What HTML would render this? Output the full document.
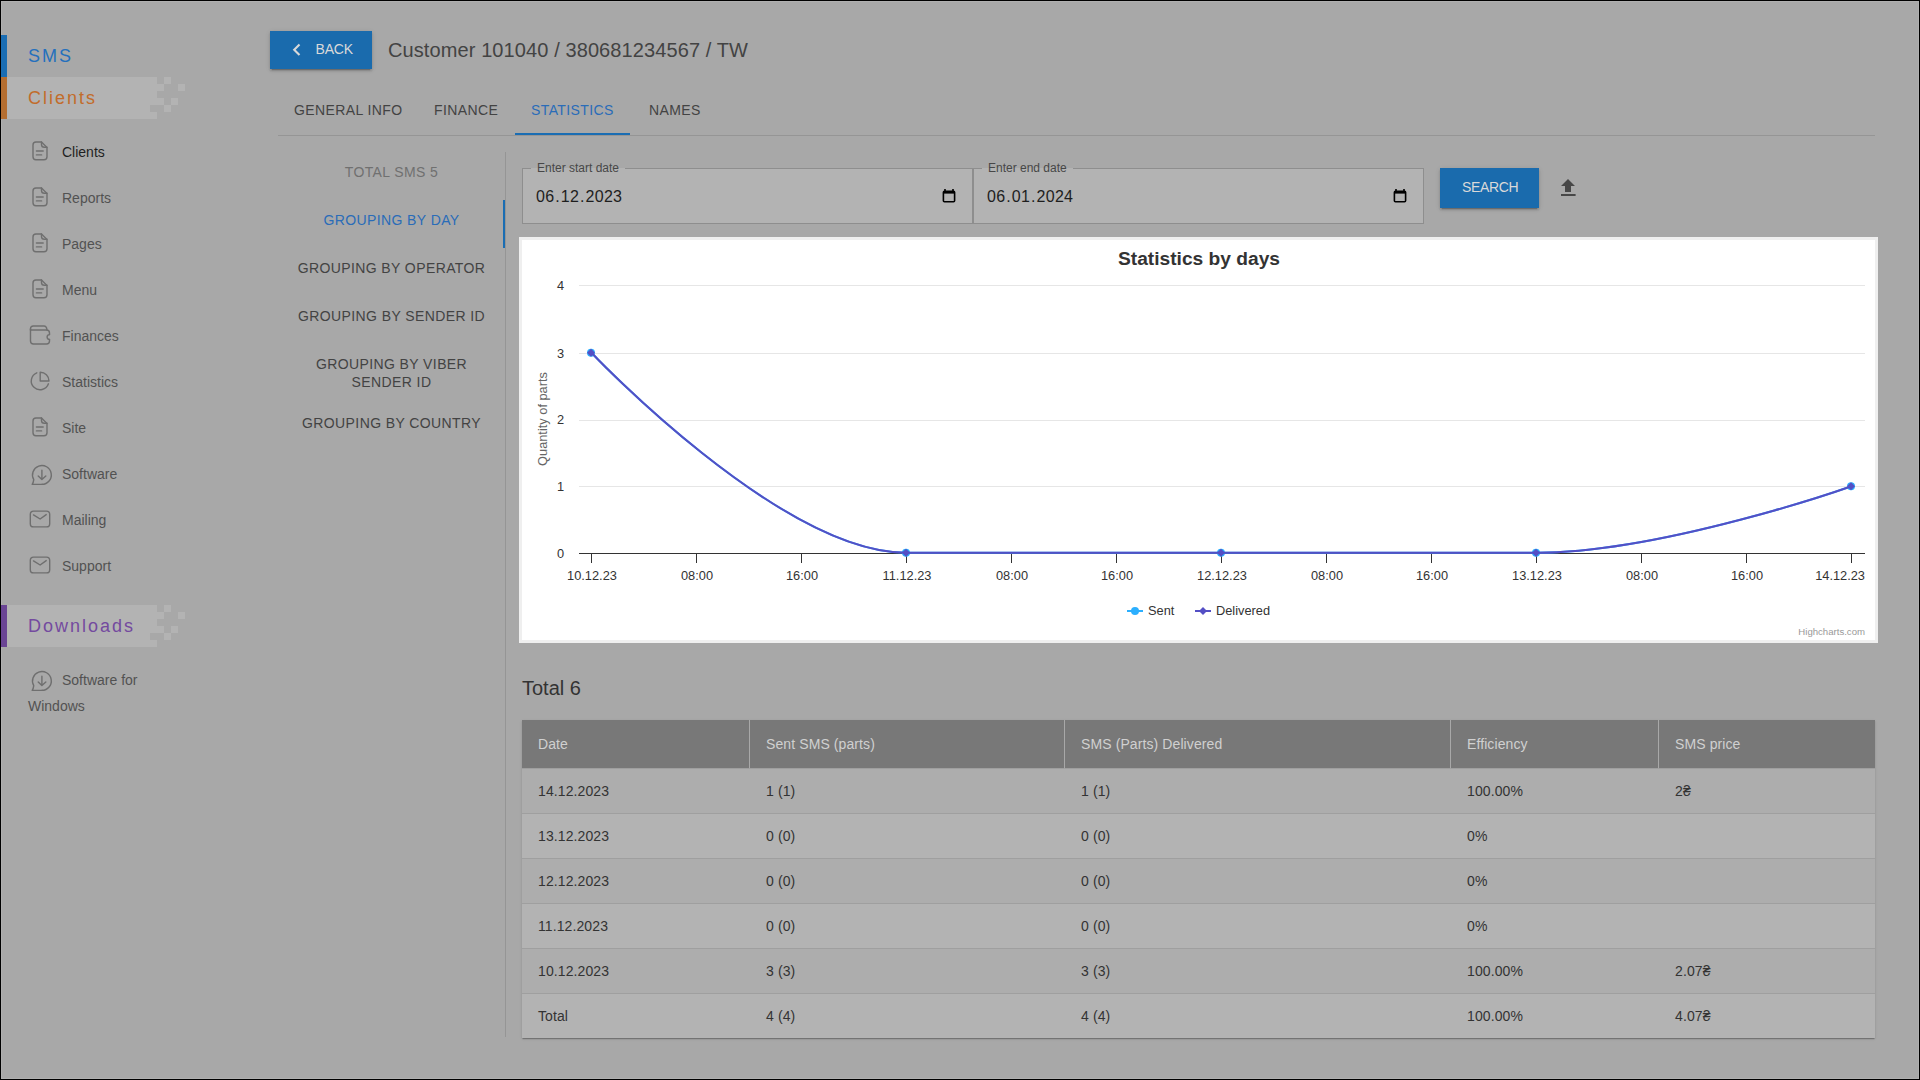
<!DOCTYPE html>
<html><head><meta charset="utf-8">
<style>
*{box-sizing:border-box;margin:0;padding:0}
html,body{width:1920px;height:1080px;overflow:hidden}
body{position:relative;background:#a8a8a8;font-family:"Liberation Sans",sans-serif;color:#333}
.frame{position:absolute;left:0;top:0;width:1920px;height:1080px;border:1px solid #000;z-index:50;pointer-events:none}
.frame2{position:absolute;left:1px;top:1px;width:1918px;height:1078px;border:1px solid #b0b0b0;z-index:49}
.abs{position:absolute;white-space:nowrap}
.sec{position:absolute;left:1px;height:42px;z-index:55}
.sec .bar{position:absolute;left:0;top:0;width:6px;height:42px}
.sec .txt{position:absolute;left:27px;top:0;line-height:42px;font-size:18px;letter-spacing:2px}
.hl{position:absolute;left:6px;top:0;width:150px;height:42px;background:#b3b3b3}
.px{position:absolute;width:7px;height:7px;background:#b3b3b3}
.nav{position:absolute;left:62px;font-size:14px;color:#525252;line-height:16px}
.ico{position:absolute;left:26px;width:30px;height:28px}
.ico svg{width:30px;height:28px;display:block}
.ico path,.ico rect{fill:none;stroke:#6f6f6f;stroke-width:1.4;stroke-linecap:round;stroke-linejoin:round}
.tab{position:absolute;top:102px;font-size:14px;letter-spacing:0.4px;color:#434343;line-height:16px}
.vt{position:absolute;left:278px;width:227px;text-align:center;font-size:14px;letter-spacing:0.4px;color:#434343;line-height:18px}
.inp{position:absolute;top:168px;height:56px;background:#b3b3b3;border:1px solid #8e8e8e}
.inp .lbl{position:absolute;left:8px;top:-8px;padding:0 6px;font-size:12px;line-height:14px;color:#474747;background:linear-gradient(#a8a8a8 0,#a8a8a8 7px,#b3b3b3 7px)}
.inp .val{position:absolute;left:13px;top:19px;font-size:16px;line-height:18px;color:#1e1e1e;letter-spacing:0.3px}
.btn{position:absolute;background:#1a6bad;color:#d9d9d9;font-size:14px;box-shadow:0px 3px 1px -2px rgba(0,0,0,0.2),0px 2px 2px 0px rgba(0,0,0,0.14),0px 1px 5px 0px rgba(0,0,0,0.12)}
table{position:absolute;left:522px;top:720px;width:1353px;border-collapse:separate;border-spacing:0;table-layout:fixed;font-size:14px;box-shadow:0px 2px 1px -1px rgba(0,0,0,0.17),0px 1px 1px 0px rgba(0,0,0,0.11),0px 1px 3px 0px rgba(0,0,0,0.1)}
th{background:#787878;color:#d0d0d0;letter-spacing:0.1px;font-weight:normal;text-align:left;height:49px;padding:0 0 0 16px;border-left:1px solid #a8a8a8;border-bottom:1px solid #9f9f9f}
th:first-child{border-left:none}
td{background:#b3b3b3;color:#333;letter-spacing:0.1px;height:45px;padding:14px 0 0 16px;vertical-align:top;line-height:16px;border-bottom:1px solid #9f9f9f}
tr:last-child td{border-bottom:none;height:44px}
td+td{padding-left:17px}
tr:nth-child(even) td{background:#adadad}
.lab{font-size:12.8px;fill:#333}
.leg{font-size:12.8px;fill:#333}
.val i{font-style:normal;margin:0 0.8px}
</style></head><body>
<div class="frame"></div><div class="frame2"></div>

<!-- SIDEBAR -->
<div class="sec" style="top:35px"><div class="bar" style="background:#1a6db3"></div><div class="txt" style="color:#2470bd">SMS</div></div>

<div class="abs" style="left:7px;top:77px;width:150px;height:7px;background:#b3b3b3;z-index:54"></div>
<div class="abs" style="left:164px;top:77px;width:7px;height:7px;background:#b3b3b3;z-index:54"></div>
<div class="abs" style="left:7px;top:84px;width:157px;height:7px;background:#b3b3b3;z-index:54"></div>
<div class="abs" style="left:178px;top:84px;width:7px;height:7px;background:#b3b3b3;z-index:54"></div>
<div class="abs" style="left:7px;top:91px;width:150px;height:7px;background:#b3b3b3;z-index:54"></div>
<div class="abs" style="left:7px;top:98px;width:157px;height:7px;background:#b3b3b3;z-index:54"></div>
<div class="abs" style="left:171px;top:98px;width:7px;height:7px;background:#b3b3b3;z-index:54"></div>
<div class="abs" style="left:7px;top:105px;width:143px;height:7px;background:#b3b3b3;z-index:54"></div>
<div class="abs" style="left:164px;top:105px;width:7px;height:7px;background:#b3b3b3;z-index:54"></div>
<div class="abs" style="left:7px;top:112px;width:150px;height:7px;background:#b3b3b3;z-index:54"></div>
<div class="sec" style="top:77px;width:200px">
  <div class="bar" style="background:#b46e31"></div>
  <div class="txt" style="color:#c26c2b">Clients</div>
</div>

<div class="ico" style="top:136px"><svg viewBox="0 0 30 28"><path d="M15.5 6 H10 Q7 6 7 9 V20.8 Q7 23.8 10 23.8 H18 Q21 23.8 21 20.8 V11.5 Z"/><path d="M15.5 6 V8.5 Q15.5 11.3 18.3 11.3 H21"/><path d="M10.4 15 H17.2 M10.4 18.9 H15.6"/></svg></div>
<div class="ico" style="top:182px"><svg viewBox="0 0 30 28"><path d="M15.5 6 H10 Q7 6 7 9 V20.8 Q7 23.8 10 23.8 H18 Q21 23.8 21 20.8 V11.5 Z"/><path d="M15.5 6 V8.5 Q15.5 11.3 18.3 11.3 H21"/><path d="M10.4 15 H17.2 M10.4 18.9 H15.6"/></svg></div>
<div class="ico" style="top:228px"><svg viewBox="0 0 30 28"><path d="M15.5 6 H10 Q7 6 7 9 V20.8 Q7 23.8 10 23.8 H18 Q21 23.8 21 20.8 V11.5 Z"/><path d="M15.5 6 V8.5 Q15.5 11.3 18.3 11.3 H21"/><path d="M10.4 15 H17.2 M10.4 18.9 H15.6"/></svg></div>
<div class="ico" style="top:274px"><svg viewBox="0 0 30 28"><path d="M15.5 6 H10 Q7 6 7 9 V20.8 Q7 23.8 10 23.8 H18 Q21 23.8 21 20.8 V11.5 Z"/><path d="M15.5 6 V8.5 Q15.5 11.3 18.3 11.3 H21"/><path d="M10.4 15 H17.2 M10.4 18.9 H15.6"/></svg></div>
<div class="ico" style="top:322px"><svg viewBox="0 0 30 28"><path d="M4.5 8 H20.5 Q23.5 8 23.5 11 V12.6 M23.5 17.4 V19 Q23.5 22 20.5 22 H7.5 Q4.5 22 4.5 19 V7"/><path d="M4.5 8 V6.8 Q4.5 4 7.3 4 H18 Q20.6 4 21 8"/><path d="M23.5 12.6 A2.4 2.4 0 0 0 23.5 17.4"/></svg></div>
<div class="ico" style="top:368px"><svg viewBox="0 0 30 28"><path d="M10.8 4.8 A8.8 8.8 0 1 0 22.4 15.8"/><path d="M14.2 4.2 V13 H23 A8.8 8.8 0 0 0 14.2 4.2 Z"/></svg></div>
<div class="ico" style="top:412px"><svg viewBox="0 0 30 28"><path d="M15.5 6 H10 Q7 6 7 9 V20.8 Q7 23.8 10 23.8 H18 Q21 23.8 21 20.8 V11.5 Z"/><path d="M15.5 6 V8.5 Q15.5 11.3 18.3 11.3 H21"/><path d="M10.4 15 H17.2 M10.4 18.9 H15.6"/></svg></div>
<div class="ico" style="top:460px"><svg viewBox="0 0 30 28"><path d="M15.9 24.3 A9.4 9.4 0 1 0 7.76 19.6 Q7.4 22.5 6.2 24.4 H15.9"/><path d="M15.9 10.2 V19.4 M12.2 15.9 L15.9 19.6 L19.8 15.9"/></svg></div>
<div class="ico" style="top:506px"><svg viewBox="0 0 30 28"><rect x="4.3" y="5.1" width="19.4" height="15.8" rx="3.2"/><path d="M7.5 8.9 L14.1 13 L20.2 8.6"/></svg></div>
<div class="ico" style="top:552px"><svg viewBox="0 0 30 28"><rect x="4.3" y="5.1" width="19.4" height="15.8" rx="3.2"/><path d="M7.5 8.9 L14.1 13 L20.2 8.6"/></svg></div>
<div class="ico" style="top:666px"><svg viewBox="0 0 30 28"><path d="M15.9 24.3 A9.4 9.4 0 1 0 7.76 19.6 Q7.4 22.5 6.2 24.4 H15.9"/><path d="M15.9 10.2 V19.4 M12.2 15.9 L15.9 19.6 L19.8 15.9"/></svg></div>
<div class="nav" style="top:144px;color:#1f1f1f">Clients</div>
<div class="nav" style="top:190px">Reports</div>
<div class="nav" style="top:236px">Pages</div>
<div class="nav" style="top:282px">Menu</div>
<div class="nav" style="top:328px">Finances</div>
<div class="nav" style="top:374px">Statistics</div>
<div class="nav" style="top:420px">Site</div>
<div class="nav" style="top:466px">Software</div>
<div class="nav" style="top:512px">Mailing</div>
<div class="nav" style="top:558px">Support</div>

<div class="abs" style="left:7px;top:605px;width:150px;height:7px;background:#b3b3b3;z-index:54"></div>
<div class="abs" style="left:164px;top:605px;width:7px;height:7px;background:#b3b3b3;z-index:54"></div>
<div class="abs" style="left:7px;top:612px;width:157px;height:7px;background:#b3b3b3;z-index:54"></div>
<div class="abs" style="left:178px;top:612px;width:7px;height:7px;background:#b3b3b3;z-index:54"></div>
<div class="abs" style="left:7px;top:619px;width:150px;height:7px;background:#b3b3b3;z-index:54"></div>
<div class="abs" style="left:7px;top:626px;width:157px;height:7px;background:#b3b3b3;z-index:54"></div>
<div class="abs" style="left:171px;top:626px;width:7px;height:7px;background:#b3b3b3;z-index:54"></div>
<div class="abs" style="left:7px;top:633px;width:143px;height:7px;background:#b3b3b3;z-index:54"></div>
<div class="abs" style="left:164px;top:633px;width:7px;height:7px;background:#b3b3b3;z-index:54"></div>
<div class="abs" style="left:7px;top:640px;width:150px;height:7px;background:#b3b3b3;z-index:54"></div>
<div class="sec" style="top:605px;width:200px">
  <div class="bar" style="background:#6a4494"></div>
  <div class="txt" style="color:#744a9f">Downloads</div>
</div>

<div class="nav" style="top:672px">Software for</div>
<div class="nav" style="top:698px;left:28px">Windows</div>

<!-- HEADER -->
<div class="btn" style="left:270px;top:31px;width:102px;height:38px"><svg style="position:absolute;left:290px;left:20px;top:10px" width="16" height="18" viewBox="0 0 16 18"><path d="M9.5 3.5 L4.2 8.8 L9.5 14" fill="none" stroke="#d9d9d9" stroke-width="2.1" stroke-linecap="butt"/></svg><span style="position:absolute;left:45.5px;top:10px;line-height:17px;font-size:14px;letter-spacing:-0.2px">BACK</span></div>
<div class="abs" style="left:388px;top:38px;font-size:20px;line-height:24px;letter-spacing:0.1px;color:#434343">Customer 101040 / 380681234567 / TW</div>

<div class="tab" style="left:294px">GENERAL INFO</div>
<div class="tab" style="left:434px">FINANCE</div>
<div class="tab" style="left:531px;color:#2a6cb8">STATISTICS</div>
<div class="tab" style="left:649px">NAMES</div>
<div class="abs" style="left:278px;top:135px;width:1597px;height:1px;background:#959595"></div>
<div class="abs" style="left:515px;top:133px;width:115px;height:2px;background:#1a6db3"></div>

<!-- VERTICAL TABS -->
<div class="abs" style="left:505px;top:152px;width:1px;height:885px;background:#959595"></div>
<div class="abs" style="left:503px;top:200px;width:2px;height:48px;background:#1a6db3"></div>
<div class="vt" style="top:163px;color:#707070">TOTAL SMS 5</div>
<div class="vt" style="top:211px;color:#2a6cb8">GROUPING BY DAY</div>
<div class="vt" style="top:259px">GROUPING BY OPERATOR</div>
<div class="vt" style="top:307px">GROUPING BY SENDER ID</div>
<div class="vt" style="top:355px">GROUPING BY VIBER<br>SENDER ID</div>
<div class="vt" style="top:414px">GROUPING BY COUNTRY</div>

<!-- INPUTS -->
<div class="inp" style="left:522px;width:451px"><div class="lbl">Enter start date</div><div class="val">06<i>.</i>12<i>.</i>2023</div><svg style="position:absolute;right:16px;top:19px" width="14" height="16" viewBox="0 0 14 16"><path d="M3 1 V3 M11 1 V3" stroke="#000" stroke-width="1.6"/><rect x="1.4" y="3.2" width="11.2" height="10.6" rx="1" fill="none" stroke="#000" stroke-width="1.6"/><rect x="1.4" y="3" width="11.2" height="2.6" fill="#000"/></svg></div>
<div class="inp" style="left:973px;width:451px"><div class="lbl">Enter end date</div><div class="val">06<i>.</i>01<i>.</i>2024</div><svg style="position:absolute;right:16px;top:19px" width="14" height="16" viewBox="0 0 14 16"><path d="M3 1 V3 M11 1 V3" stroke="#000" stroke-width="1.6"/><rect x="1.4" y="3.2" width="11.2" height="10.6" rx="1" fill="none" stroke="#000" stroke-width="1.6"/><rect x="1.4" y="3" width="11.2" height="2.6" fill="#000"/></svg></div>
<div class="btn" style="left:1440px;top:168px;width:99px;height:40px"><span style="position:absolute;left:22px;top:11px;line-height:17px;font-size:14px;letter-spacing:-0.35px">SEARCH</span></div>
<svg class="abs" style="left:1555.5px;top:176px" width="24" height="24" viewBox="0 0 24 24"><path d="M5 20h14.6v-2H5v2zm0-10h4v6h6v-6h4l-7-7-7 7z" fill="#474747"/></svg>

<!-- CHART -->
<div class="abs" style="left:519px;top:237px;width:1359px;height:406px;background:#efefef"></div>
<div class="abs" style="left:522px;top:240px;width:1353px;height:400px;background:#fff"></div>
<svg class="abs" style="left:522px;top:240px" width="1353" height="400" viewBox="522 240 1353 400" font-family="Liberation Sans, sans-serif">
<text x="1199" y="265" text-anchor="middle" style="font-size:19.2px;font-weight:bold;fill:#333">Statistics by days</text>
<path d="M579 285.5 H1865" stroke="#e6e6e6" stroke-width="1"/>
<path d="M579 353.5 H1865" stroke="#e6e6e6" stroke-width="1"/>
<path d="M579 420.5 H1865" stroke="#e6e6e6" stroke-width="1"/>
<path d="M579 486.5 H1865" stroke="#e6e6e6" stroke-width="1"/>
<path d="M579 553.5 H1865" stroke="#333" stroke-width="1"/>
<path d="M591.5 553 V563 M696.5 553 V563 M801.5 553 V563 M906.5 553 V563 M1011.5 553 V563 M1116.5 553 V563 M1221.5 553 V563 M1326.5 553 V563 M1431.5 553 V563 M1536.5 553 V563 M1641.5 553 V563 M1746.5 553 V563 M1851.5 553 V563 " stroke="#333" stroke-width="1"/>
<text x="564" y="290.4" text-anchor="end" class="lab">4</text>
<text x="564" y="357.6" text-anchor="end" class="lab">3</text>
<text x="564" y="424.3" text-anchor="end" class="lab">2</text>
<text x="564" y="491.1" text-anchor="end" class="lab">1</text>
<text x="564" y="557.8" text-anchor="end" class="lab">0</text>
<text x="592.0" y="580" text-anchor="middle" class="lab">10.12.23</text>
<text x="697.0" y="580" text-anchor="middle" class="lab">08:00</text>
<text x="802.0" y="580" text-anchor="middle" class="lab">16:00</text>
<text x="907.0" y="580" text-anchor="middle" class="lab">11.12.23</text>
<text x="1012.0" y="580" text-anchor="middle" class="lab">08:00</text>
<text x="1117.0" y="580" text-anchor="middle" class="lab">16:00</text>
<text x="1222.0" y="580" text-anchor="middle" class="lab">12.12.23</text>
<text x="1327.0" y="580" text-anchor="middle" class="lab">08:00</text>
<text x="1432.0" y="580" text-anchor="middle" class="lab">16:00</text>
<text x="1537.0" y="580" text-anchor="middle" class="lab">13.12.23</text>
<text x="1642.0" y="580" text-anchor="middle" class="lab">08:00</text>
<text x="1747.0" y="580" text-anchor="middle" class="lab">16:00</text>
<text x="1865" y="580" text-anchor="end" class="lab">14.12.23</text>
<text transform="translate(547 419) rotate(-90)" text-anchor="middle" style="font-size:12.8px;fill:#666">Quantity of parts</text>
<path d="M 591.50 352.75 C 591.50 352.75 780.50 552.75 906.50 552.75 C 1032.50 552.75 1095.50 552.75 1221.50 552.75 C 1347.50 552.75 1410.50 552.75 1536.50 552.75 C 1662.50 552.75 1851.50 486.25 1851.50 486.25" fill="none" stroke="#2caffe" stroke-width="2" stroke-linejoin="round" stroke-linecap="round"/>
<circle cx="591" cy="352.75" r="4" fill="#2caffe"/>
<circle cx="906" cy="552.75" r="4" fill="#2caffe"/>
<circle cx="1221" cy="552.75" r="4" fill="#2caffe"/>
<circle cx="1536" cy="552.75" r="4" fill="#2caffe"/>
<circle cx="1851" cy="486.25" r="4" fill="#2caffe"/>
<path d="M 591.50 352.75 C 591.50 352.75 780.50 552.75 906.50 552.75 C 1032.50 552.75 1095.50 552.75 1221.50 552.75 C 1347.50 552.75 1410.50 552.75 1536.50 552.75 C 1662.50 552.75 1851.50 486.25 1851.50 486.25" fill="none" stroke="#544fc5" stroke-width="2" stroke-linejoin="round" stroke-linecap="round"/>
<path d="M591 348.75 L595 352.75 L591 356.75 L587 352.75 Z" fill="#544fc5"/>
<path d="M906 548.75 L910 552.75 L906 556.75 L902 552.75 Z" fill="#544fc5"/>
<path d="M1221 548.75 L1225 552.75 L1221 556.75 L1217 552.75 Z" fill="#544fc5"/>
<path d="M1536 548.75 L1540 552.75 L1536 556.75 L1532 552.75 Z" fill="#544fc5"/>
<path d="M1851 482.25 L1855 486.25 L1851 490.25 L1847 486.25 Z" fill="#544fc5"/>
<path d="M1127 611 H1143" stroke="#2caffe" stroke-width="2"/><circle cx="1135" cy="611" r="4" fill="#2caffe"/>
<text x="1148" y="615" class="leg">Sent</text>
<path d="M1195 611 H1211" stroke="#544fc5" stroke-width="2"/><path d="M1203 607 L1207 611 L1203 615 L1199 611 Z" fill="#544fc5"/>
<text x="1216" y="615" class="leg">Delivered</text>
<text x="1865" y="635" text-anchor="end" style="font-size:9.6px;fill:#999">Highcharts.com</text>
</svg>

<!-- TABLE -->
<div class="abs" style="left:522px;top:676px;font-size:20px;line-height:24px;color:#333">Total 6</div>
<table>
<tr><th style="width:227px">Date</th><th style="width:315px">Sent SMS (parts)</th><th style="width:386px">SMS (Parts) Delivered</th><th style="width:208px">Efficiency</th><th>SMS price</th></tr>
<tr><td>14.12.2023</td><td>1 (1)</td><td>1 (1)</td><td>100.00%</td><td>2₴</td></tr>
<tr><td>13.12.2023</td><td>0 (0)</td><td>0 (0)</td><td>0%</td><td></td></tr>
<tr><td>12.12.2023</td><td>0 (0)</td><td>0 (0)</td><td>0%</td><td></td></tr>
<tr><td>11.12.2023</td><td>0 (0)</td><td>0 (0)</td><td>0%</td><td></td></tr>
<tr><td>10.12.2023</td><td>3 (3)</td><td>3 (3)</td><td>100.00%</td><td>2.07₴</td></tr>
<tr><td>Total</td><td>4 (4)</td><td>4 (4)</td><td>100.00%</td><td>4.07₴</td></tr>
</table>

</body></html>
